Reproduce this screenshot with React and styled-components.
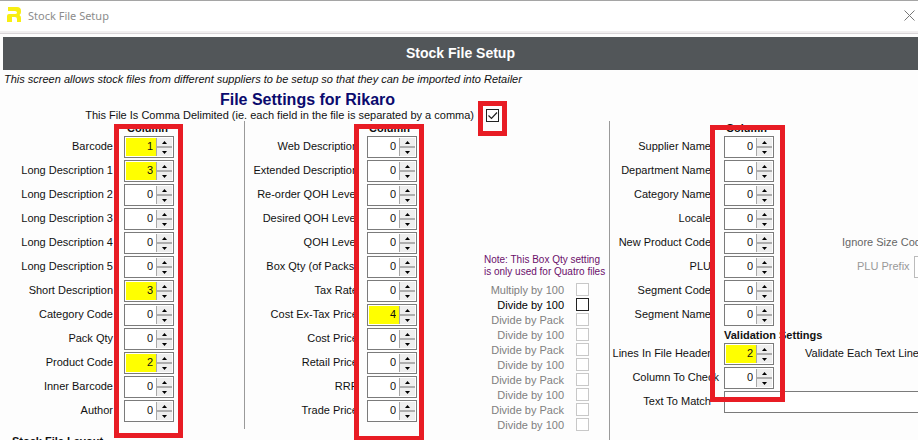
import React, { useState } from 'react';
import styled, { createGlobalStyle, css } from 'styled-components';

const GlobalStyle = createGlobalStyle`
  * {
    box-sizing: border-box;
  }

  body {
    margin: 0;
    background: #fdfdfd;
    color: #111;
    font-family: 'Liberation Sans', Arial, sans-serif;
    font-size: 11px;
  }

  input,
  button {
    font: inherit;
    color: inherit;
  }
`;

const Window = styled.div`
  height: 100vh;
  overflow: hidden;
  border-top: 1px solid #a5a5a5;
`;

const TitleBar = styled.header`
  display: flex;
  align-items: center;
  height: 33px;
  padding: 0 2px 4px 7px;
  background: #fff;
  border-bottom: 1px solid #d9d5d8;
  box-shadow: inset 0 -2px 0 #f1eff0;
`;

const WindowTitle = styled.span`
  flex: 1;
  margin-left: 6px;
  color: #8c8c8c;
  font-family: 'Noto Sans', 'Open Sans', sans-serif;
  font-size: 11px;
`;

const CloseButton = styled.button`
  display: flex;
  padding: 1px;
  border: 0;
  background: none;
`;

const Banner = styled.h1`
  margin: 3px 0 0 3px;
  background: #525659;
  color: #fff;
  font-size: 14px;
  line-height: 33px;
  text-align: center;
`;

const Intro = styled.p`
  margin: 0 0 0 4px;
  font-size: 11px;
  font-style: italic;
  line-height: 18px;
`;

const SettingsTitle = styled.h2`
  width: 615px;
  margin: 3px 0 0;
  color: #0a0a6e;
  font-size: 16px;
  line-height: 18px;
  text-align: center;
`;

const DelimiterRow = styled.div`
  position: relative;
  display: flex;
  align-items: center;
  justify-content: flex-end;
  gap: 12px;
  width: 499px;
  height: 12px;
`;

const Groups = styled.main`
  display: flex;
`;

const LeftSide = styled.div`
  flex: none;
  width: 609px;
`;

const GroupPair = styled.div`
  display: flex;
  height: 308px;
`;

const Group = styled.section`
  position: relative;
  display: flex;
  flex: ${({ $grow }) => ($grow ? '1' : 'none')};
  min-width: 0;
  width: ${({ $width }) => ($width ? `${$width}px` : 'auto')};
  ${({ $divided }) => $divided && css`
    border-left: 1px solid #9a9a9a;
  `}
`;

const Rows = styled.div`
  flex: ${({ $grow }) => ($grow ? '1' : 'none')};
  min-width: 0;
`;

const ColumnHeader = styled.div`
  padding-left: ${({ $indent }) => $indent}px;
  font-weight: bold;
  line-height: 15px;
`;

const Row = styled.div`
  display: flex;
  align-items: center;
  height: 22px;
  margin-bottom: 2px;
  white-space: nowrap;
`;

const RowLabel = styled.label`
  display: flex;
  flex: none;
  justify-content: flex-end;
  width: ${({ $width }) => $width}px;
  margin-right: ${({ $gap }) => $gap}px;
  line-height: 20px;
  padding-bottom: 2px;
`;

const SpinBox = styled.div`
  display: flex;
  flex: none;
  width: 50px;
  height: 22px;
  padding: 1px;
  border: 1px solid #7b7b7b;
  background: #fff;
`;

const SpinInput = styled.input`
  flex: 1;
  min-width: 0;
  padding: 0 3px 2px 0;
  border: 0;
  outline: 0;
  background: ${({ $filled }) => ($filled ? '#ffff00' : '#fff')};
  text-align: right;
`;

const SpinButtons = styled.div`
  display: grid;
  grid-template-rows: 1fr 1fr;
  gap: 2px;
  width: 16px;
  border-left: 1px solid #a8a8a8;
  background: #adadad;
`;

const SpinButton = styled.button`
  display: flex;
  align-items: center;
  justify-content: center;
  padding: 0;
  border: 0;
  background: #eee;
`;

const TextBox = styled.input`
  flex: 1;
  min-width: 0;
  height: 22px;
  padding: 0 4px;
  border: 1px solid #7b7b7b;
  border-right: 0;
  outline: 0;
  background: #fff;

  &:disabled {
    border-color: #bbb;
  }
`;

const ExtraLabel = styled.label`
  flex: none;
  padding: 0 0 2px ${({ $indent }) => $indent}px;
  margin-right: 4px;
  color: ${({ $color }) => $color || 'inherit'};
`;

const ValidationTitle = styled.h3`
  margin: 0;
  padding-left: 114px;
  font-size: 11px;
  line-height: 15px;
`;

const SideOptions = styled.div`
  margin-left: 67px;
  padding-top: 133px;
`;

const Note = styled.p`
  margin: 0 0 4px;
  color: #6b0f6b;
  font-size: 10px;
  line-height: 12px;
  white-space: nowrap;
`;

const OptionRow = styled.div`
  display: flex;
  align-items: center;
  gap: 12px;
  height: 15px;
`;

const OptionLabel = styled.label`
  width: 80px;
  color: ${({ $disabled }) => ($disabled ? '#808080' : '#000')};
  text-align: right;
  white-space: nowrap;
`;

const CheckWrap = styled.span`
  position: relative;
  display: flex;

  svg {
    position: absolute;
    inset: 0;
    pointer-events: none;
  }
`;

const CheckInput = styled.input`
  appearance: none;
  width: 13px;
  height: 13px;
  margin: 0;
  border: 1px solid #222;
  background: #fff;

  &:disabled {
    border-color: #c8c8c8;
  }
`;

const LayoutTitle = styled.h3`
  margin: 5px 0 0 12px;
  font-size: 11px;
  line-height: 15px;
`;

/* Red frames laid over the form to point out the fields to fill in */
const Highlight = styled.div`
  position: absolute;
  z-index: 1;
  top: ${({ $top }) => $top}px;
  left: ${({ $left }) => $left}px;
  width: ${({ $width }) => $width}px;
  height: ${({ $height }) => $height}px;
  border: 5px solid #e81c24;
  pointer-events: none;
`;

const productFields = [
  ['Barcode', 1],
  ['Long Description 1', 3],
  ['Long Description 2', 0],
  ['Long Description 3', 0],
  ['Long Description 4', 0],
  ['Long Description 5', 0],
  ['Short Description', 3],
  ['Category Code', 0],
  ['Pack Qty', 0],
  ['Product Code', 2],
  ['Inner Barcode', 0],
  ['Author', 0],
];

const priceFields = [
  ['Web Description', 0],
  ['Extended Description', 0],
  ['Re-order QOH Level', 0],
  ['Desired QOH Level', 0],
  ['QOH Level', 0],
  ['Box Qty (of Packs)', 0],
  ['Tax Rate', 0],
  ['Cost Ex-Tax Price', 4],
  ['Cost Price', 0],
  ['Retail Price', 0],
  ['RRP', 0],
  ['Trade Price', 0],
];

const options = [
  'Multiply by 100',
  'Divide by 100',
  'Divide by Pack',
  'Divide by 100',
  'Divide by Pack',
  'Divide by 100',
  'Divide by Pack',
  'Divide by 100',
  'Divide by Pack',
  'Divide by 100',
];

const toId = (label) => label.toLowerCase().replace(/[^a-z0-9]+/g, '-');

const Logo = () => (
  <svg width="15" height="16" viewBox="0 0 15 16" aria-hidden="true">
    <path d="M1 0h9q4 0 4 4v1q0 2-1.5 3Q14 9 14 11v4h-4v-3q0-2-2-2H5v5H0V9q0-2 2-2h6q2 0 2-1.500T8 4H1z" fill="#f8ee12" />
  </svg>
);

const Arrow = ({ down }) => (
  <svg width="5" height="3" viewBox="0 0 5 3" aria-hidden="true">
    <path d={down ? 'M0 0h5L2.5 3z' : 'M0 3h5L2.5 0z'} fill="#000" />
  </svg>
);

const Check = ({ id, defaultChecked = false, disabled }) => {
  const [checked, setChecked] = useState(defaultChecked);

  return (
    <CheckWrap>
      <CheckInput
        type="checkbox"
        id={id}
        checked={checked}
        disabled={disabled}
        onChange={(e) => setChecked(e.target.checked)}
      />
      {checked && (
        <svg width="13" height="13" viewBox="0 0 13 13">
          <path d="M2.5 6.5l3 3 5.5-6" fill="none" stroke="#222" strokeWidth="1.2" />
        </svg>
      )}
    </CheckWrap>
  );
};

const SpinRow = ({ label, initial, labelWidth, gap = 11, children }) => {
  const [value, setValue] = useState(initial);
  const id = toId(label);

  return (
    <Row>
      <RowLabel htmlFor={id} $width={labelWidth} $gap={gap}>{label}</RowLabel>
      <SpinBox>
        <SpinInput
          id={id}
          inputMode="numeric"
          value={value}
          $filled={initial > 0}
          onChange={(e) => setValue(Number(e.target.value) || 0)}
        />
        <SpinButtons>
          <SpinButton type="button" aria-label="Up" onClick={() => setValue(value + 1)}>
            <Arrow />
          </SpinButton>
          <SpinButton type="button" aria-label="Down" onClick={() => setValue(Math.max(0, value - 1))}>
            <Arrow down />
          </SpinButton>
        </SpinButtons>
      </SpinBox>
      {children}
    </Row>
  );
};

const App = () => (
  <>
    <GlobalStyle />
    <Window>
      <TitleBar>
        <Logo />
        <WindowTitle>Stock File Setup</WindowTitle>
        <CloseButton type="button" aria-label="Close">
          <svg width="11" height="11" viewBox="0 0 11 11">
            <path d="M0.5 0.5l10 10M10.5 0.5l-10 10" stroke="#777" fill="none" />
          </svg>
        </CloseButton>
      </TitleBar>

      <Banner>Stock File Setup</Banner>
      <Intro>
        This screen allows stock files from different suppliers to be setup so that they can be imported into Retailer
      </Intro>
      <SettingsTitle>File Settings for Rikaro</SettingsTitle>
      <DelimiterRow>
        <label htmlFor="comma-delimited">
          This File Is Comma Delimited (ie. each field in the file is separated by a comma)
        </label>
        <Check id="comma-delimited" defaultChecked />
        <Highlight $top={-8} $left={478} $width={29} $height={35} />
      </DelimiterRow>

      <Groups>
        <LeftSide>
          <GroupPair>
            <Group $width={244}>
              <Rows>
                <ColumnHeader $indent={127}>Column</ColumnHeader>
                {productFields.map(([label, value]) => (
                  <SpinRow key={label} label={label} initial={value} labelWidth={113} />
                ))}
              </Rows>
              <Highlight $top={3} $left={114} $width={69} $height={314} />
            </Group>

            <Group $divided $grow>
              <Rows>
                <ColumnHeader $indent={124}>Column</ColumnHeader>
                {priceFields.map(([label, value]) => (
                  <SpinRow key={label} label={label} initial={value} labelWidth={113} gap={9} />
                ))}
              </Rows>
              <SideOptions>
                <Note>
                  Note: This Box Qty setting
                  <br />
                  is only used for Quatro files
                </Note>
                {options.map((label, i) => (
                  <OptionRow key={i}>
                    <OptionLabel htmlFor={`option-${i}`} $disabled={i !== 1}>{label}</OptionLabel>
                    <Check id={`option-${i}`} disabled={i !== 1} />
                  </OptionRow>
                ))}
              </SideOptions>
              <Highlight $top={3} $left={109} $width={70} $height={317} />
            </Group>
          </GroupPair>
          <LayoutTitle>Stock File Layout</LayoutTitle>
        </LeftSide>

        <Group $divided $grow>
          <Rows $grow>
            <ColumnHeader $indent={116}>Column</ColumnHeader>
            <SpinRow label="Supplier Name" initial={0} labelWidth={101} gap={13} />
            <SpinRow label="Department Name" initial={0} labelWidth={101} gap={13} />
            <SpinRow label="Category Name" initial={0} labelWidth={101} gap={13} />
            <SpinRow label="Locale" initial={0} labelWidth={101} gap={13} />
            <SpinRow label="New Product Code" initial={0} labelWidth={101} gap={13}>
              <ExtraLabel htmlFor="ignore-size" $indent={68} $color="#666">Ignore Size Codes</ExtraLabel>
              <Check id="ignore-size" disabled />
            </SpinRow>
            <SpinRow label="PLU" initial={0} labelWidth={101} gap={13}>
              <ExtraLabel htmlFor="plu-prefix" $indent={83} $color="#999">PLU Prefix</ExtraLabel>
              <TextBox id="plu-prefix" disabled />
            </SpinRow>
            <SpinRow label="Segment Code" initial={0} labelWidth={101} gap={13} />
            <SpinRow label="Segment Name" initial={0} labelWidth={101} gap={13} />
            <ValidationTitle>Validation Settings</ValidationTitle>
            <SpinRow label="Lines In File Header" initial={2} labelWidth={101} gap={13}>
              <ExtraLabel htmlFor="validate-line" $indent={31}>Validate Each Text Line</ExtraLabel>
              <Check id="validate-line" />
            </SpinRow>
            <SpinRow label="Column To Check" initial={0} labelWidth={109} gap={5} />
            <Row>
              <RowLabel htmlFor="text-to-match" $width={101} $gap={13}>Text To Match</RowLabel>
              <TextBox id="text-to-match" />
            </Row>
          </Rows>
          <Highlight $top={4} $left={100} $width={75} $height={277} />
        </Group>
      </Groups>
    </Window>
  </>
);

export default App;
